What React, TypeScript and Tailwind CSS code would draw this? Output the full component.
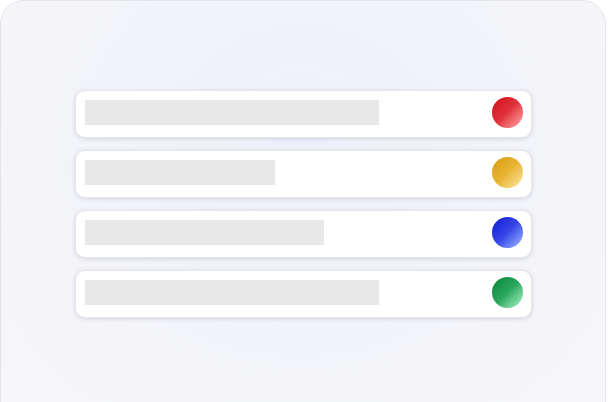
const rows = [
  { id: 1, bar: "w-[294px]", dot: "bg-gradient-to-br from-[#d0000a] via-[#e0323c] to-[#ffa3ab]" },
  { id: 2, bar: "w-[190px]", dot: "bg-gradient-to-br from-[#d99a00] via-[#e8b632] to-[#fee79a]" },
  { id: 3, bar: "w-[239px]", dot: "bg-gradient-to-br from-[#0a12d2] via-[#3a45e6] to-[#aab6ff]" },
  { id: 4, bar: "w-[294px]", dot: "bg-gradient-to-br from-[#02823a] via-[#2aa85e] to-[#a8f8d0]" },
];

export default function App() {
  return (
    <div className="w-[608px] h-[402px] bg-white overflow-hidden">
      <div className="w-[606px] h-[430px] rounded-[24px] border border-[#e4e5ea] bg-[#f6f6f9] bg-[radial-gradient(ellipse_at_50%_35%,#eff0fa_0%,#f3f4f9_50%,#f7f7f9_100%)] pt-[89px] pl-[74px]">
        <div className="flex flex-col gap-[12px] w-[457px]">
          {rows.map((row) => (
            <div
              key={row.id}
              className="h-[48px] bg-white rounded-[10px] border border-[#e6e7ec] shadow-[0_1px_4px_rgba(60,64,100,0.18)] flex items-center justify-between pl-[9px] pr-[8px] pb-[3px]"
            >
              <div className={`h-[25px] bg-[#e8e8e8] ${row.bar}`} />
              <div className={`w-[31px] h-[31px] rounded-full ${row.dot}`} />
            </div>
          ))}
        </div>
      </div>
    </div>
  );
}
